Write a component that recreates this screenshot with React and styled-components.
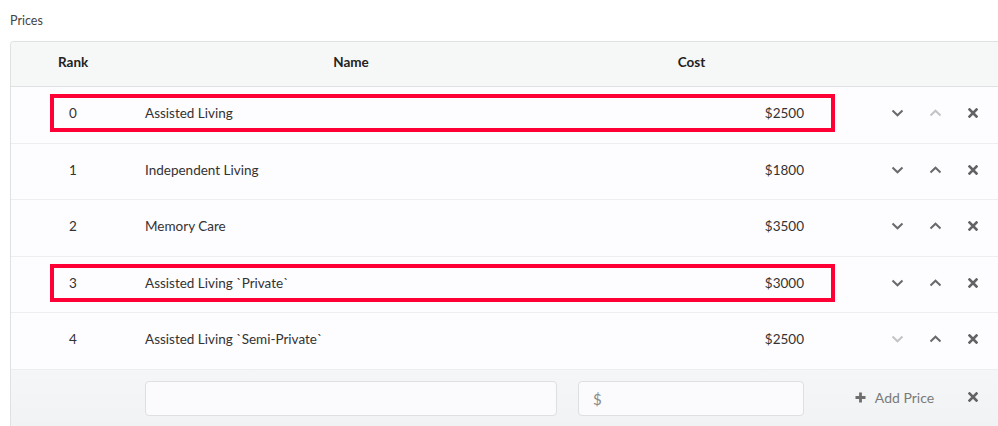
import React from "react";
import styled, { createGlobalStyle, css } from "styled-components";

const Global = createGlobalStyle`
  html, body { margin: 0; padding: 0; overflow: hidden; background: #ffffff; }
  body { font-family: Lato, "Open Sans", sans-serif; color: #333; }
  * { box-sizing: border-box; }
`;

const Page = styled.div`
  padding: 12px 0 0 10px;
  width: 1010px;
`;

const Title = styled.div`
  font-size: 12.5px;
  color: #444;
  height: 29px;
  line-height: 17px;
`;

const Card = styled.div`
  border: 1px solid #dfe2e3;
  border-right: none;
  border-radius: 4px 0 0 0;
  background: #fdfcfe;
  width: 1000px;
`;

const Row = styled.div`
  display: flex;
  align-items: center;
  height: ${(p) => p.$h || "56.5px"};
  padding-left: 39px;
  padding-bottom: ${(p) => p.$pb || "3px"};
  border-bottom: ${(p) => (p.$last ? "none" : "1px solid #eceef0")};
  background: ${(p) => p.$bg || "transparent"};
`;

const HeaderRow = styled(Row)`
  background: #f6f7f7;
  border-bottom: 1px solid #dfe2e3;
  border-radius: 4px 0 0 0;
`;

const FooterRow = styled(Row)`
  background: linear-gradient(#f5f6f7, #f1f2f3);
  align-items: flex-start;
  padding-top: 10px;
`;

const Main = styled.div`
  display: grid;
  grid-template-columns: 95px 412px 21px 227px 30px;
  align-items: center;
  width: 785px;
  height: 38px;
  ${(p) =>
    p.$hl &&
    css`
      box-shadow: inset 0 0 0 4px #ff0036;
    `}
`;

const RankCell = styled.div`
  grid-column: 1;
  padding-left: ${(p) => (p.$head ? "8px" : "19px")};
  font-size: 13.5px;
`;

const NameCell = styled.div`
  grid-column: 2;
  font-size: 13.5px;
  text-align: ${(p) => (p.$head ? "center" : "left")};
`;

const CostCell = styled.div`
  grid-column: 4;
  font-size: 13.5px;
  text-align: ${(p) => (p.$head ? "center" : "right")};
  padding-right: ${(p) => (p.$head ? "0" : "1px")};
`;

const HeadText = styled.span`
  font-weight: 700;
  color: #222;
`;

const Actions = styled.div`
  display: flex;
  align-items: center;
  padding-left: 43px;
  height: 38px;
`;

const IconBtn = styled.button`
  width: 38px;
  height: 24px;
  border: none;
  background: none;
  padding: 0;
  display: flex;
  align-items: center;
  justify-content: center;
  color: ${(p) => (p.$disabled ? "#c4c4c6" : "#6a6a6c")};
  cursor: pointer;
`;

const Input = styled.div`
  height: 35px;
  border: 1px solid #dedfe1;
  border-radius: 4px;
  background: #fbfafc;
  font-size: 15px;
  color: #8a8a8a;
  display: flex;
  align-items: center;
  padding-left: 14px;
`;

const FooterActions = styled.div`
  display: flex;
  align-items: center;
  height: 35px;
`;

const AddPrice = styled.button`
  width: 119px;
  height: 35px;
  border: none;
  background: none;
  display: flex;
  align-items: center;
  justify-content: center;
  gap: 9px;
  font-family: Lato, sans-serif;
  font-size: 14px;
  color: #7a7a7a;
  padding: 0;
`;

const Down = () => (
  <svg width="13" height="8" viewBox="0 0 13 8">
    <path d="M1.5 1.5 L6.5 6.3 L11.5 1.5" fill="none" stroke="currentColor" strokeWidth="2" />
  </svg>
);
const Up = () => (
  <svg width="13" height="8" viewBox="0 0 13 8">
    <path d="M1.5 6.5 L6.5 1.7 L11.5 6.5" fill="none" stroke="currentColor" strokeWidth="2" />
  </svg>
);
const Times = () => (
  <svg width="10" height="10" viewBox="0 0 10 10">
    <path d="M1.5 1.5 L8.5 8.5 M8.5 1.5 L1.5 8.5" fill="none" stroke="#636365" strokeWidth="2.6" strokeLinecap="square" />
  </svg>
);
const Plus = () => (
  <svg width="11" height="11" viewBox="0 0 11 11">
    <path d="M5.5 0.5 V10.5 M0.5 5.5 H10.5" fill="none" stroke="#6e6e6e" strokeWidth="2.8" />
  </svg>
);

const prices = [
  { rank: 0, name: "Assisted Living", cost: 2500, hl: true },
  { rank: 1, name: "Independent Living", cost: 1800 },
  { rank: 2, name: "Memory Care", cost: 3500 },
  { rank: 3, name: "Assisted Living `Private`", cost: 3000, hl: true },
  { rank: 4, name: "Assisted Living `Semi-Private`", cost: 2500 },
];

export default function App() {
  return (
    <>
      <Global />
      <Page>
        <Title>Prices</Title>
        <Card>
          <HeaderRow $h="45px" $pb="5px">
            <Main>
              <RankCell $head><HeadText>Rank</HeadText></RankCell>
              <NameCell $head><HeadText>Name</HeadText></NameCell>
              <CostCell $head><HeadText>Cost</HeadText></CostCell>
            </Main>
          </HeaderRow>
          {prices.map((p, i) => (
            <Row key={p.rank}>
              <Main $hl={p.hl}>
                <RankCell>{p.rank}</RankCell>
                <NameCell>{p.name}</NameCell>
                <CostCell>${p.cost}</CostCell>
              </Main>
              <Actions>
                <IconBtn $disabled={i === prices.length - 1}><Down /></IconBtn>
                <IconBtn $disabled={i === 0}><Up /></IconBtn>
                <IconBtn><Times /></IconBtn>
              </Actions>
            </Row>
          ))}
          <FooterRow $h="60px" $last>
            <Main>
              <NameCell><Input /></NameCell>
              <CostCell><Input>$</Input></CostCell>
            </Main>
            <FooterActions>
              <AddPrice><Plus />Add Price</AddPrice>
              <IconBtn><Times /></IconBtn>
            </FooterActions>
          </FooterRow>
        </Card>
      </Page>
    </>
  );
}
